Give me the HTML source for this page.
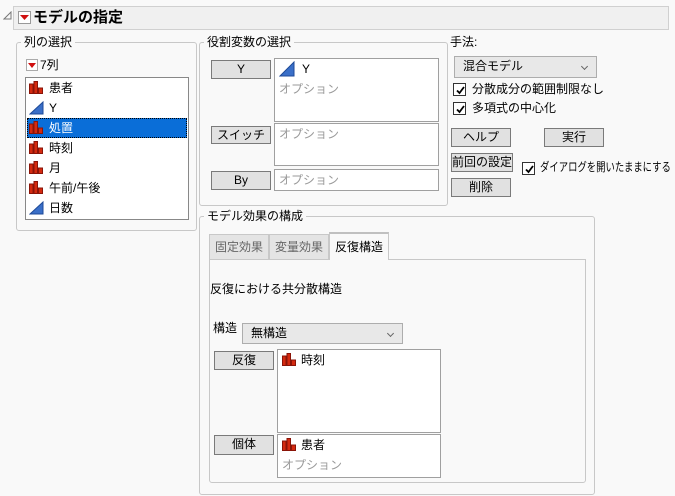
<!DOCTYPE html>
<html><head><meta charset="utf-8"><style>
*{box-sizing:border-box;margin:0;padding:0;white-space:nowrap}
body{width:675px;height:496px;background:#f9f9f9;font-family:"Liberation Sans","Noto Sans CJK JP",sans-serif;font-size:12px;color:#000;position:relative;overflow:hidden}
.a{position:absolute}
.grp{position:absolute;border:1px solid #c8c8c8;border-radius:3px}
.lbl{position:absolute;background:#f9f9f9;padding:0 3px;font-size:12px;line-height:14px}
.btn{position:absolute;background:#e1e1e1;border:1px solid #7a7a7a;text-align:center;font-size:12px;line-height:16px}
.box{position:absolute;background:#fff;border:1px solid #a0a0a0}
.opt{color:#999}
.chk{position:absolute;width:13px;height:13px;border:1px solid #333;background:#fff}
.chk svg{position:absolute;left:1px;top:1px}
.combo{position:absolute;background:#e8e8e8;border:1px solid #adadad;padding-left:8px;line-height:19px}
.combo:after{content:"";position:absolute;right:9px;top:7px;width:4px;height:4px;border-right:1px solid #666;border-bottom:1px solid #666;transform:rotate(45deg)}
.it{position:absolute;left:1px;width:160px;height:20px;line-height:20px;padding-left:22px}
.ic{position:absolute;left:2px;top:3px}
</style></head><body>
<svg class="a" style="left:3px;top:11px" width="9" height="9"><path d="M8 1 L8 8 L1 8 Z" fill="none" stroke="#777"/></svg>
<div class="a" style="left:13px;top:6px;width:656px;height:24px;background:#f0f0f0;border:1px solid #d0d0d0"></div>
<div class="a" style="left:18px;top:11px;width:13px;height:13px;background:#fff;border:1px solid #999"></div>
<svg class="a" style="left:20px;top:15px" width="9" height="6"><path d="M0 0H9L4.5 5Z" fill="#d01010"/></svg>
<div class="a" style="left:33px;top:8px;font-size:15px;font-weight:bold;line-height:20px">モデルの指定</div>

<div class="grp" style="left:16px;top:42px;width:181px;height:189px"></div>
<div class="lbl" style="left:21px;top:35px">列の選択</div>
<div class="a" style="left:26px;top:59px;width:12px;height:12px;background:#fff;border:1px solid #aaa"></div>
<svg class="a" style="left:28px;top:63px" width="8" height="5"><path d="M0 0H8L4 5Z" fill="#d01010"/></svg>
<div class="a" style="left:40px;top:57px;line-height:16px">7列</div>
<div class="box" style="left:25px;top:77px;width:164px;height:143px;border-color:#888"></div>

<div class="grp" style="left:199px;top:42px;width:249px;height:164px"></div>
<div class="lbl" style="left:204px;top:35px">役割変数の選択</div>
<div class="btn" style="left:211px;top:60px;width:60px;height:19px">Y</div>
<div class="box" style="left:274px;top:58px;width:165px;height:64px"></div>
<div class="btn" style="left:211px;top:126px;width:60px;height:18px">スイッチ</div>
<div class="box" style="left:274px;top:123px;width:165px;height:43px"></div>
<div class="btn" style="left:211px;top:171px;width:60px;height:19px">By</div>
<div class="box" style="left:274px;top:169px;width:165px;height:22px"></div>
<svg class="a" style="left:279px;top:61px" width="16" height="16"><path d="M1 15L15 1V15Z" fill="#3a6fc8" stroke="#1e4a98"/></svg>
<div class="a" style="left:302px;top:61px;line-height:16px">Y</div>
<div class="a opt" style="left:279px;top:81px;line-height:16px">オプション</div>
<div class="a opt" style="left:279px;top:126px;line-height:16px">オプション</div>
<div class="a opt" style="left:279px;top:172px;line-height:16px">オプション</div>

<div class="a" style="left:450px;top:35px;line-height:14px">手法:</div>
<div class="combo" style="left:454px;top:56px;width:143px;height:22px">混合モデル</div>
<div class="chk" style="left:453px;top:83px"><svg width="11" height="11"><path d="M2 5.5L4.5 8L9 2" fill="none" stroke="#000" stroke-width="1.8"/></svg></div>
<div class="a" style="left:472px;top:81px;line-height:16px">分散成分の範囲制限なし</div>
<div class="chk" style="left:453px;top:102px"><svg width="11" height="11"><path d="M2 5.5L4.5 8L9 2" fill="none" stroke="#000" stroke-width="1.8"/></svg></div>
<div class="a" style="left:472px;top:100px;line-height:16px">多項式の中心化</div>
<div class="btn" style="left:451px;top:128px;width:60px;height:19px">ヘルプ</div>
<div class="btn" style="left:544px;top:128px;width:60px;height:19px">実行</div>
<div class="btn" style="left:451px;top:153px;width:62px;height:19px">前回の設定</div>
<div class="chk" style="left:522px;top:162px"><svg width="11" height="11"><path d="M2 5.5L4.5 8L9 2" fill="none" stroke="#000" stroke-width="1.8"/></svg></div>
<div class="a" style="left:540px;top:159px;line-height:16px;transform:scaleX(0.78);transform-origin:0 0">ダイアログを開いたままにする</div>
<div class="btn" style="left:451px;top:178px;width:60px;height:19px">削除</div>

<div class="grp" style="left:199px;top:216px;width:396px;height:279px"></div>
<div class="lbl" style="left:204px;top:209px">モデル効果の構成</div>
<div class="a" style="left:209px;top:259px;width:377px;height:224px;border:1px solid #c8c8c8;border-radius:0 0 3px 3px;background:#f9f9f9"></div>
<div class="a" style="left:209px;top:234px;width:60px;height:26px;background:#e4e4e4;border:1px solid #c8c8c8;color:#666;text-align:center;line-height:24px">固定効果</div>
<div class="a" style="left:269px;top:234px;width:60px;height:26px;background:#e4e4e4;border:1px solid #c8c8c8;color:#666;text-align:center;line-height:24px">変量効果</div>
<div class="a" style="left:329px;top:232px;width:60px;height:28px;background:#f9f9f9;border:1px solid #c8c8c8;border-top:2px solid #c0c0c0;border-bottom:none;text-align:center;line-height:26px">反復構造</div>
<div class="a" style="left:210px;top:281px;line-height:16px">反復における共分散構造</div>
<div class="a" style="left:213px;top:320px;line-height:16px">構造</div>
<div class="combo" style="left:242px;top:323px;width:161px;height:21px;line-height:19px">無構造</div>
<div class="btn" style="left:214px;top:351px;width:60px;height:19px">反復</div>
<div class="box" style="left:277px;top:349px;width:164px;height:84px"></div>
<div class="btn" style="left:214px;top:435px;width:60px;height:20px">個体</div>
<div class="box" style="left:277px;top:434px;width:164px;height:44px"></div>
<svg class="a" style="left:282px;top:353px" width="14" height="13"><path d="M0.5 3H4V12.5H0.5ZM5 0.5H8.5V12.5H5ZM9.5 7H13.5V12.5H9.5Z" fill="#d42a10" stroke="#8a1408"/></svg>
<div class="a" style="left:301px;top:352px;line-height:16px">時刻</div>
<svg class="a" style="left:282px;top:438px" width="14" height="13"><path d="M0.5 3H4V12.5H0.5ZM5 0.5H8.5V12.5H5ZM9.5 7H13.5V12.5H9.5Z" fill="#d42a10" stroke="#8a1408"/></svg>
<div class="a" style="left:301px;top:437px;line-height:16px">患者</div>
<div class="a opt" style="left:282px;top:457px;line-height:16px">オプション</div>

<div class="a" style="left:26px;top:78px;width:162px;height:141px;background:#fff">
<div class="it" style="top:0"><svg class="ic" width="14" height="13"><path d="M0.5 3H4V12.5H0.5ZM5 0.5H8.5V12.5H5ZM9.5 7H13.5V12.5H9.5Z" fill="#d42a10" stroke="#8a1408"/></svg>患者</div>
<div class="it" style="top:20px"><svg class="ic" width="16" height="14"><path d="M1 13L14 1V13Z" fill="#3a6fc8" stroke="#1e4a98"/></svg>Y</div>
<div class="it" style="top:40px;background:#0a6ed8;color:#fff;outline:1px dotted #000;outline-offset:-1px"><svg class="ic" width="14" height="13"><path d="M0.5 3H4V12.5H0.5ZM5 0.5H8.5V12.5H5ZM9.5 7H13.5V12.5H9.5Z" fill="#d42a10" stroke="#8a1408"/></svg>処置</div>
<div class="it" style="top:60px"><svg class="ic" width="14" height="13"><path d="M0.5 3H4V12.5H0.5ZM5 0.5H8.5V12.5H5ZM9.5 7H13.5V12.5H9.5Z" fill="#d42a10" stroke="#8a1408"/></svg>時刻</div>
<div class="it" style="top:80px"><svg class="ic" width="14" height="13"><path d="M0.5 3H4V12.5H0.5ZM5 0.5H8.5V12.5H5ZM9.5 7H13.5V12.5H9.5Z" fill="#d42a10" stroke="#8a1408"/></svg>月</div>
<div class="it" style="top:100px"><svg class="ic" width="14" height="13"><path d="M0.5 3H4V12.5H0.5ZM5 0.5H8.5V12.5H5ZM9.5 7H13.5V12.5H9.5Z" fill="#d42a10" stroke="#8a1408"/></svg>午前/午後</div>
<div class="it" style="top:120px"><svg class="ic" width="16" height="14"><path d="M1 13L14 1V13Z" fill="#3a6fc8" stroke="#1e4a98"/></svg>日数</div>
</div>
</body></html>
